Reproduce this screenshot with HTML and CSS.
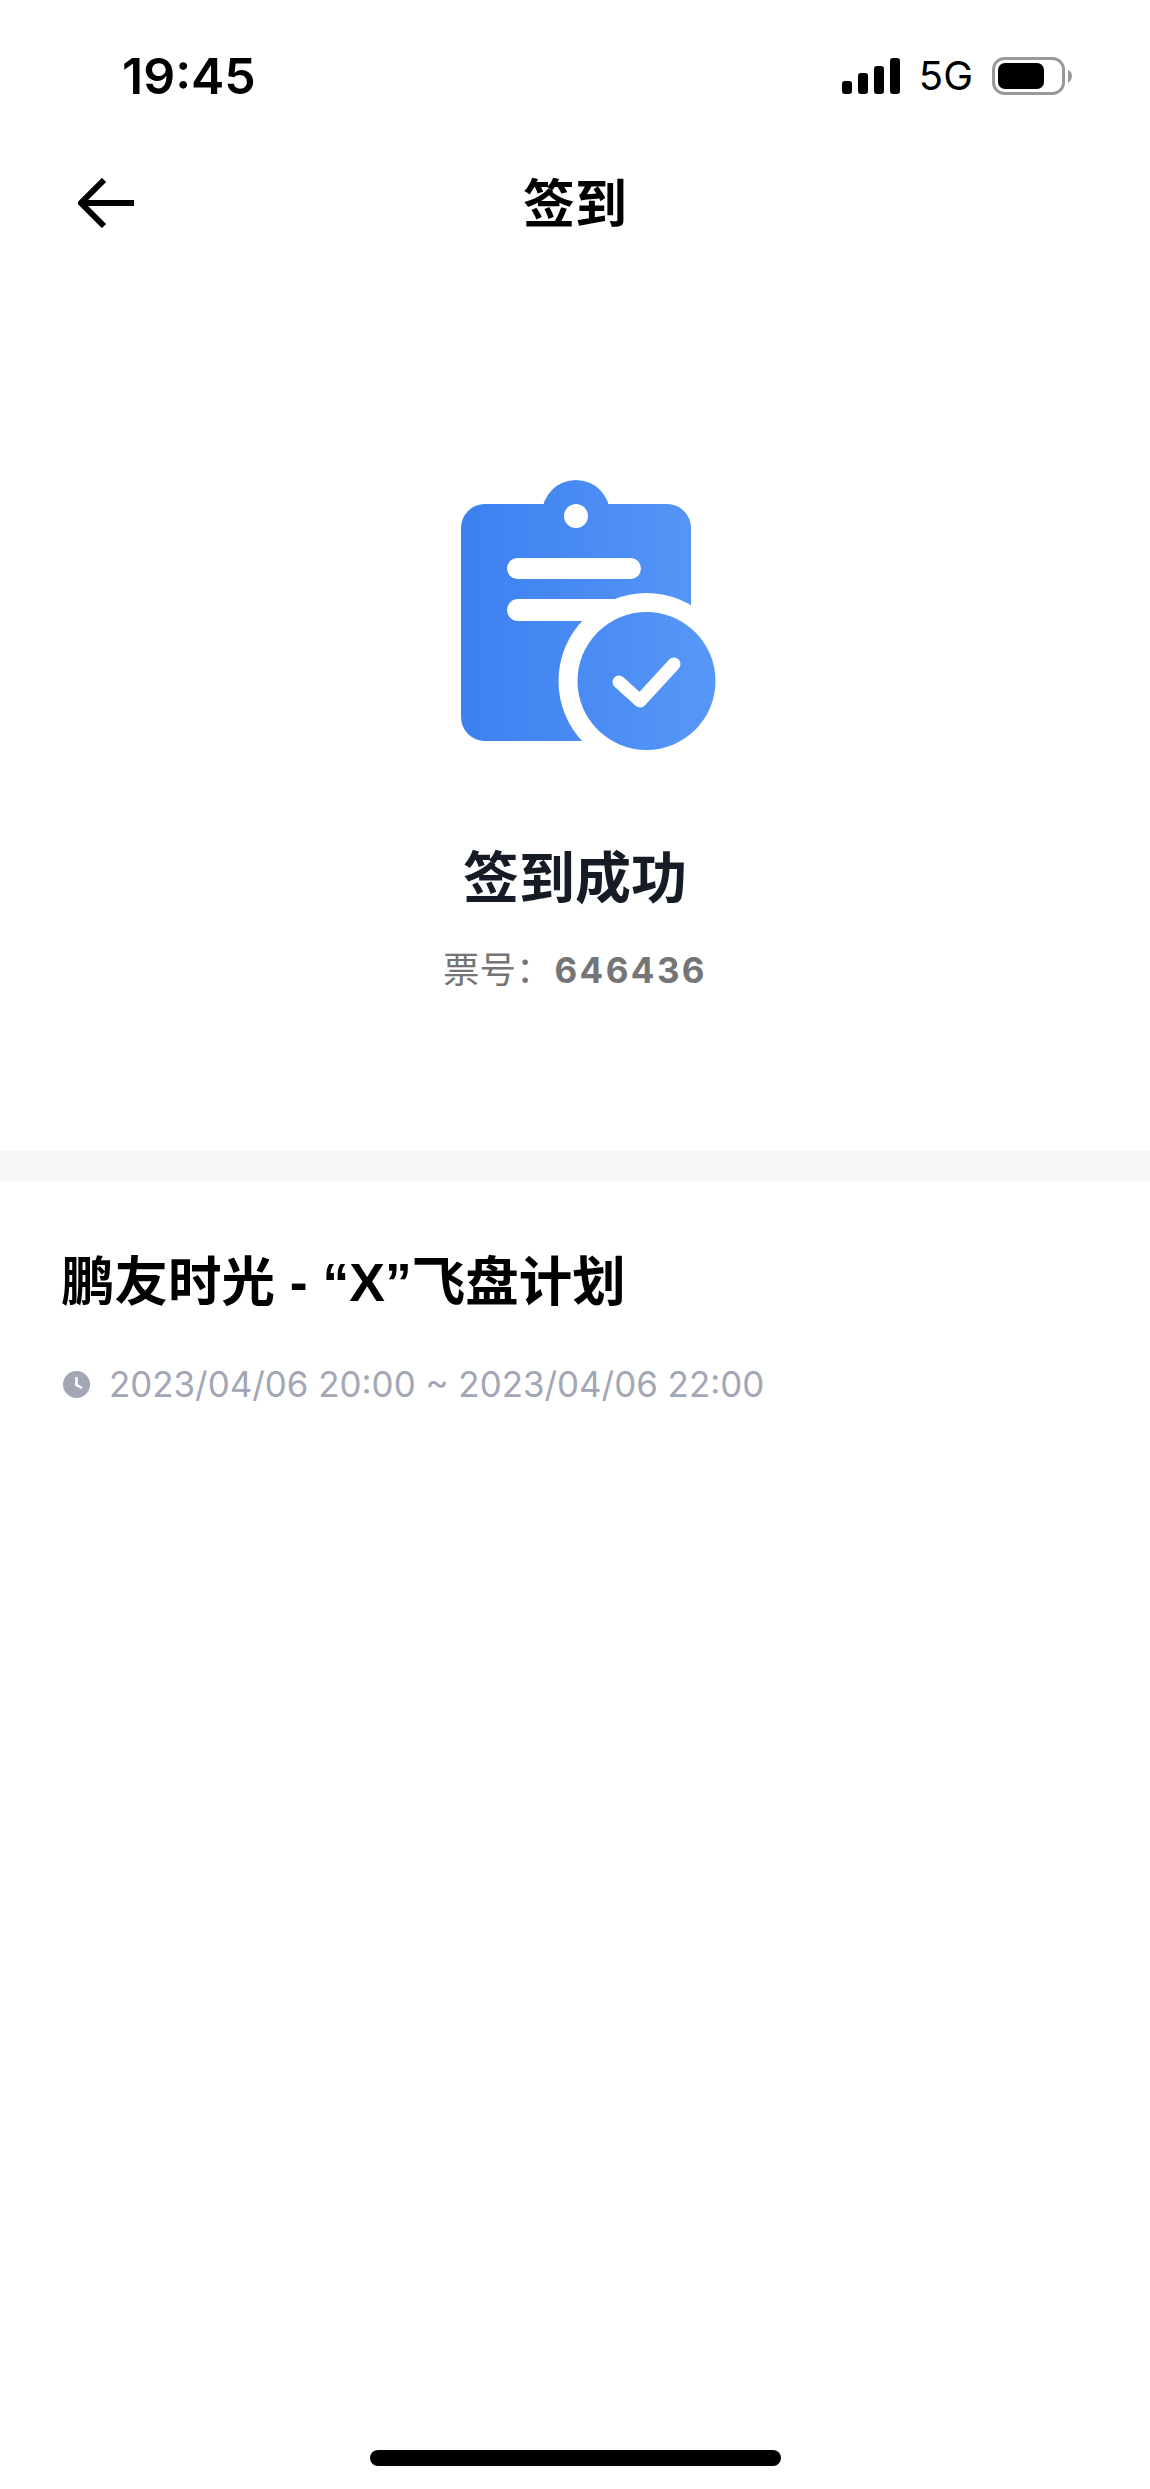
FILE: index.html
```html
<!DOCTYPE html>
<html lang="zh-CN">
<head>
  <meta charset="UTF-8" />
  <meta name="viewport" content="width=device-width, initial-scale=1.0" />
  <title>签到</title>
  <link rel="stylesheet" href="styles.css">
</head>
<body>
  <div class="page">
    <!-- Status bar -->
    <div class="status-bar">
      <span class="time">19:45</span>
      <div class="status-icons">
        <svg class="signal" width="58" height="36" viewBox="0 0 58 36">
          <rect x="0" y="23" width="10" height="13" rx="3" />
          <rect x="16" y="15" width="10" height="21" rx="3" />
          <rect x="32" y="8" width="10" height="28" rx="3" />
          <rect x="48" y="0" width="10" height="36" rx="3" />
        </svg>
        <span class="network">5G</span>
        <svg class="battery" width="80" height="38" viewBox="0 0 80 38">
          <rect x="1.5" y="1.5" width="70" height="35" rx="11" fill="none" stroke="#999" stroke-width="3" />
          <rect x="6" y="6" width="46" height="26" rx="7" fill="#000" />
          <path d="M76 13 Q80 15 80 19 Q80 23 76 26 Z" fill="#999" />
        </svg>
      </div>
    </div>

    <!-- Nav -->
    <div class="nav">
      <svg class="back" width="56" height="50" viewBox="0 0 56 50">
        <path d="M26 2 L3 25 L26 48 M3 25 H56" fill="none" stroke="#000" stroke-width="6" />
      </svg>
      <h1 class="nav-title">签到</h1>
    </div>

    <!-- Result -->
    <div class="result">
      <svg class="result-icon" width="320" height="270" viewBox="415 480 320 270">
        <defs>
          <linearGradient id="blue" gradientUnits="userSpaceOnUse" x1="461" y1="0" x2="735" y2="0">
            <stop offset="0" stop-color="#3d80f0" />
            <stop offset="1" stop-color="#5999f8" />
          </linearGradient>
        </defs>
        <circle cx="576" cy="514" r="34" fill="url(#blue)" />
        <rect x="461" y="504" width="230" height="237" rx="24" fill="url(#blue)" />
        <circle cx="576" cy="516" r="12" fill="#fff" />
        <rect x="507" y="558" width="134" height="21" rx="10.5" fill="#fff" />
        <rect x="507" y="599" width="120" height="22" rx="11" fill="#fff" />
        <circle cx="646.5" cy="681" r="88" fill="#fff" />
        <circle cx="646.5" cy="681" r="69" fill="url(#blue)" />
        <path d="M619 682 L640 701 L674 664" fill="none" stroke="#fff" stroke-width="13" stroke-linecap="round" stroke-linejoin="round" />
      </svg>
      <h2 class="result-title">签到成功</h2>
      <p class="ticket">票号：<b>646436</b></p>
    </div>

    <div class="divider"></div>

    <!-- Event -->
    <div class="event">
      <h3 class="event-title">鹏友时光 - “X”飞盘计划</h3>
      <div class="event-time">
        <svg class="clock" width="27" height="27" viewBox="0 0 27 27">
          <circle cx="13.5" cy="13.5" r="13.5" fill="#a2a6b5" />
          <path d="M13.5 6 V14 L19 17" fill="none" stroke="#fff" stroke-width="2.5" />
        </svg>
        <span>2023/04/06 20:00 ~ 2023/04/06 22:00</span>
      </div>
    </div>

    <div class="home-bar"></div>
  </div>
</body>
</html>
```

FILE: styles.css
```css
/* RESET & BASE STYLES */
* {
  margin: 0;
  padding: 0;
  box-sizing: border-box;
}
body {
  font-family: "Liberation Sans", "Noto Sans CJK SC", sans-serif;
  background: #fff;
  color: #000;
}
svg {
  display: block;
}
.page {
  display: flex;
  flex-direction: column;
  min-height: 100vh;
}
/* STATUS BAR */
.status-bar {
  display: flex;
  justify-content: space-between;
  align-items: center;
  height: 152px;
  padding: 0 78px 0 122px;
}
.time {
  font-family: Inter, sans-serif;
  font-size: 50px;
  font-weight: 600;
  line-height: 1;
}
.status-icons {
  display: flex;
  align-items: center;
  gap: 19px;
}
.network {
  font-family: Inter, sans-serif;
  font-size: 40px;
  line-height: 1;
}
/* NAV */
.nav {
  position: relative;
  height: 102px;
  padding-top: 4px;
  display: flex;
  align-items: center;
  justify-content: center;
}
.back {
  position: absolute;
  left: 78px;
  top: 26px;
}
.nav-title {
  font-size: 52px;
  font-weight: bold;
  line-height: 1;
}
/* RESULT */
.result {
  height: 897px;
  padding-top: 226px;
  display: flex;
  flex-direction: column;
  align-items: center;
}
.result-title {
  margin-top: 93px;
  font-size: 56px;
  line-height: 72px;
  font-weight: bold;
  color: #161c26;
}
.ticket {
  margin-top: 32px;
  font-size: 36.5px;
  line-height: 46px;
  font-weight: normal;
  color: #757575;
}
.ticket b {
  margin-left: 2px;
  font-family: Inter, sans-serif;
  font-size: 35px;
  letter-spacing: 2.4px;
}
.divider {
  height: 30px;
  background: #f7f7f7;
}
/* EVENT */
.event {
  padding: 70px 61px 0;
}
.event-title {
  font-size: 53.5px;
  line-height: 64px;
  font-weight: bold;
}
.event-time {
  display: flex;
  align-items: center;
  gap: 19px;
  margin-top: 46px;
  font-family: Inter, sans-serif;
  font-size: 34.9px;
  line-height: 46px;
  color: #a2a6b5;
}
.clock {
  margin-left: 2px;
}
/* HOME INDICATOR */
.home-bar {
  width: 411px;
  height: 16px;
  margin: auto auto 23px;
  background: #000;
  border-radius: 8px;
}
```
